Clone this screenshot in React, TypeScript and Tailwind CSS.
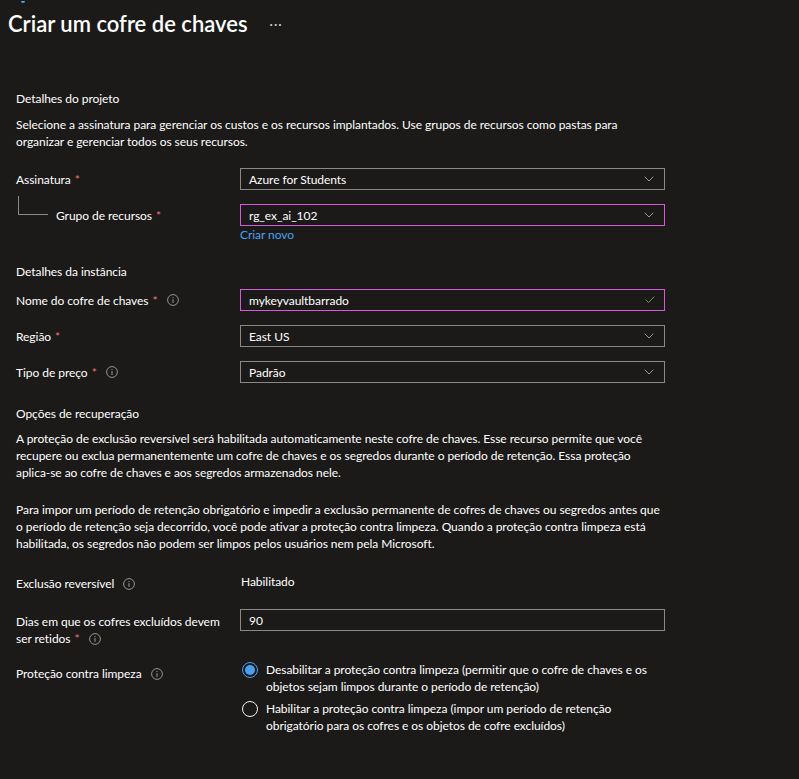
import { Check, ChevronDown } from "lucide-react";

const font = { fontFamily: 'Lato, "Liberation Sans", Arial, sans-serif' };

const Req = () => <span className="ml-[4px] text-[#f1707b]">*</span>;

const Info = () => (
  <svg width="12" height="12" viewBox="0 0 12 12" className="ml-[9px] inline-block shrink-0 text-[#a19f9d]">
    <circle cx="6" cy="6" r="5.4" fill="none" stroke="currentColor" strokeWidth="0.9" />
    <line x1="6" y1="5.2" x2="6" y2="8.8" stroke="currentColor" strokeWidth="1" />
    <circle cx="6" cy="3.6" r="0.6" fill="currentColor" />
  </svg>
);

const Field = ({ value, focused, valid }: { value: string; focused?: boolean; valid?: boolean }) => (
  <div
    className={
      "flex h-[22px] w-[425px] items-center justify-between border pl-[8px] pr-[7px] " +
      (focused ? "border-[#d35cdc]" : "border-[#8a8886]")
    }
  >
    <span>{value}</span>
    {valid ? (
      <Check size={12} strokeWidth={1.5} className="mr-[1px] text-[#92c353]" />
    ) : (
      <ChevronDown size={16} strokeWidth={1.1} className="text-[#c8c6c4]" />
    )}
  </div>
);

const Radio = ({ checked }: { checked?: boolean }) =>
  checked ? (
    <span className="mt-[1px] flex h-[16px] w-[16px] shrink-0 items-center justify-center rounded-full border border-[#4aa0f0]">
      <span className="h-[10px] w-[10px] rounded-full bg-[#4aa0f0]" />
    </span>
  ) : (
    <span className="mt-[1px] h-[16px] w-[16px] shrink-0 rounded-full border border-[#f3f2f1]" />
  );

export default function App() {
  return (
    <div
      className="h-[779px] w-[799px] overflow-hidden bg-[#1b1a19] text-[12px] leading-[17px] tracking-[-0.05px] text-white"
      style={font}
    >
      {/* breadcrumb, cut off at the top */}
      <div className="h-[3px] pl-[21px]">
        <div className="h-[3px] w-[4px] rounded-b-[3px] border-b-2 border-[#4aa0f0]" />
      </div>

      <header className="flex items-center pl-[8px] pt-[5px]">
        <h1 className="h-[32px] text-[22px] font-semibold leading-[32px] tracking-normal">Criar um cofre de chaves</h1>
        <span className="ml-[22px] text-[13px] tracking-[1px] text-[#d2d0ce]">···</span>
      </header>

      <main className="flex flex-col pl-[16px]">
        <div className="mt-[50px]">Detalhes do projeto</div>
        <p className="mt-[9px]">
          Selecione a assinatura para gerenciar os custos e os recursos implantados. Use grupos de recursos como pastas para
          <br />
          organizar e gerenciar todos os seus recursos.
        </p>

        <div className="mt-[18px] flex items-center">
          <div className="w-[224px]">
            Assinatura
            <Req />
          </div>
          <Field value="Azure for Students" />
        </div>

        <div className="mt-[14px] flex items-center">
          <div className="flex w-[224px] items-center">
            <div className="-mt-[11px] ml-[2px] h-[19px] w-[30px] self-start border-b border-l border-[#8a8886]" />
            <span className="ml-[8px]">
              Grupo de recursos
              <Req />
            </span>
          </div>
          <Field value="rg_ex_ai_102" focused />
        </div>
        <div className="pl-[224px] text-[#4aa0f0]">Criar novo</div>

        <div className="mt-[20px]">Detalhes da instância</div>

        <div className="mt-[9px] flex items-center">
          <div className="flex w-[224px] items-center">
            Nome do cofre de chaves
            <Req />
            <Info />
          </div>
          <Field value="mykeyvaultbarrado" focused valid />
        </div>

        <div className="mt-[14px] flex items-center">
          <div className="w-[224px]">
            Região
            <Req />
          </div>
          <Field value="East US" />
        </div>

        <div className="mt-[14px] flex items-center">
          <div className="flex w-[224px] items-center">
            Tipo de preço
            <Req />
            <Info />
          </div>
          <Field value="Padrão" />
        </div>

        <div className="mt-[22px]">Opções de recuperação</div>
        <p className="mt-[8px]">
          A proteção de exclusão reversível será habilitada automaticamente neste cofre de chaves. Esse recurso permite que você
          <br />
          recupere ou exclua permanentemente um cofre de chaves e os segredos durante o período de retenção. Essa proteção
          <br />
          aplica-se ao cofre de chaves e aos segredos armazenados nele.
        </p>
        <p className="mt-[20px]">
          Para impor um período de retenção obrigatório e impedir a exclusão permanente de cofres de chaves ou segredos antes que
          <br />
          o período de retenção seja decorrido, você pode ativar a proteção contra limpeza. Quando a proteção contra limpeza está
          <br />
          habilitada, os segredos não podem ser limpos pelos usuários nem pela Microsoft.
        </p>

        <div className="mt-[22px] flex">
          <div className="flex w-[224px] items-center pt-[1px]">
            Exclusão reversível
            <Info />
          </div>
          <div className="-mt-[1px] pl-[1px]">Habilitado</div>
        </div>

        <div className="mt-[17px] flex items-start">
          <div className="mt-[4px] w-[224px] whitespace-nowrap">
            Dias em que os cofres excluídos devem
            <br />
            <span className="inline-flex items-center">
              ser retidos
              <Req />
              <Info />
            </span>
          </div>
          <div className="flex h-[22px] w-[425px] items-center border border-[#8a8886] pl-[8px]">90</div>
        </div>

        <div className="mt-[14px] flex items-start">
          <div className="mt-[4px] flex w-[224px] items-center">
            Proteção contra limpeza
            <Info />
          </div>
          <div className="flex flex-col gap-[5px] pl-[2px]">
            <label className="flex gap-[8px]">
              <Radio checked />
              <span>
                Desabilitar a proteção contra limpeza (permitir que o cofre de chaves e os
                <br />
                objetos sejam limpos durante o período de retenção)
              </span>
            </label>
            <label className="flex gap-[8px]">
              <Radio />
              <span>
                Habilitar a proteção contra limpeza (impor um período de retenção
                <br />
                obrigatório para os cofres e os objetos de cofre excluídos)
              </span>
            </label>
          </div>
        </div>
      </main>
    </div>
  );
}
